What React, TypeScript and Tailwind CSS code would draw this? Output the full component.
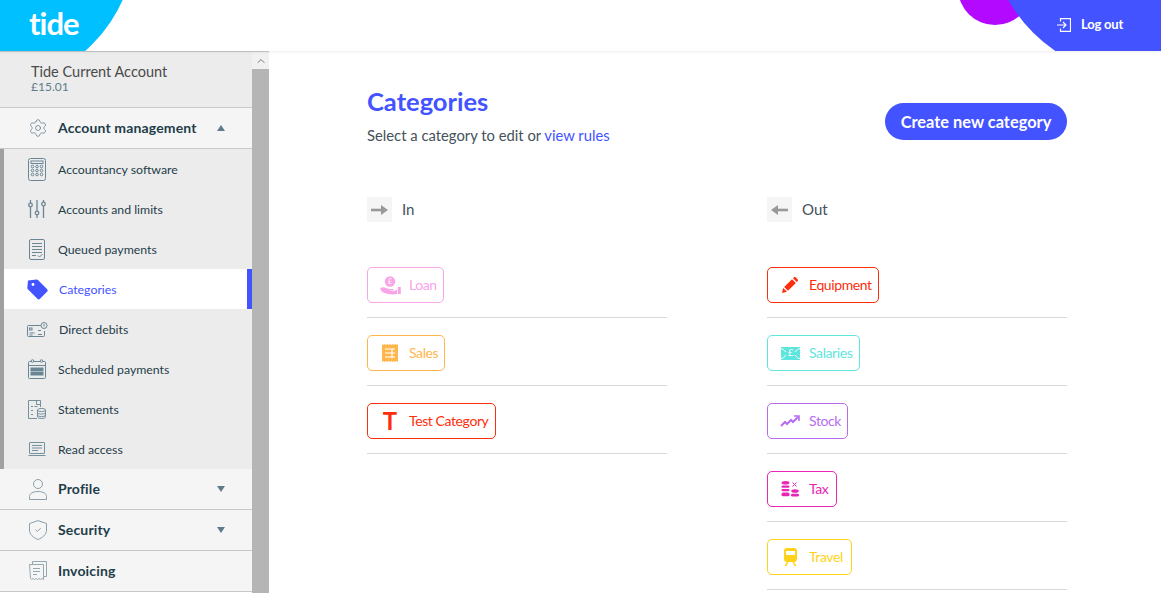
import type { ReactNode } from 'react';
import { ChevronUp, Settings } from 'lucide-react';

const stroke = '#6a8694';
const lightStroke = '#8ba0ab';

const Calculator = () => (
  <svg width="18" height="23" viewBox="0 0 18 23" fill="none" stroke={stroke} strokeWidth="1">
    <rect x="0.5" y="0.5" width="17" height="22" rx="2" />
    <rect x="3" y="3" width="12" height="2.5" />
    <g fill="none">
      {[8.5, 12.5, 16.5].map((y) =>
        [4.5, 9, 13.5].map((x) => <circle key={`${x}-${y}`} cx={x} cy={y} r="1.3" />),
      )}
    </g>
  </svg>
);

const Sliders = () => (
  <svg width="18" height="20" viewBox="0 0 18 20" fill="none" stroke={stroke} strokeWidth="1.3">
    <path d="M2.5 1v3M2.5 8v11M9 1v11M9 16v3M15.500 1v2M15.500 7v12" />
    <circle cx="2.5" cy="6" r="1.8" />
    <circle cx="9" cy="14" r="1.8" />
    <circle cx="15.5" cy="5" r="1.8" />
  </svg>
);

const Queued = () => (
  <svg width="16" height="21" viewBox="0 0 16 21" fill="none" stroke={stroke} strokeWidth="1">
    <rect x="0.5" y="0.5" width="15" height="20" rx="1.5" />
    <path d="M3 4.500h10M3 7.500h10M3 10.500h10M3 13.500h10M3 16.500h4M9 16.500l1.500 1.500 3-3" />
  </svg>
);

const Tag = () => (
  <svg width="21" height="21" viewBox="0 0 21 21">
    <path
      d="M1 1.5 9.5 0.5a2 2 0 0 1 1.5.6l9 9a1.800 1.800 0 0 1 0 2.600l-7 7a1.800 1.800 0 0 1-2.600 0l-9-9A2 2 0 0 1 0.300 9Z"
      fill="#4353ff"
    />
    <circle cx="6" cy="5.5" r="1.4" fill="#fff" />
  </svg>
);

const DirectDebit = () => (
  <svg width="21" height="15" viewBox="0 0 21 15" fill="none" stroke={stroke} strokeWidth="1">
    <path d="M15 3.500H1.500a1 1 0 0 0-1 1v9a1 1 0 0 0 1 1h15a1 1 0 0 0 1-1V9" />
    <rect x="2.5" y="6" width="2.5" height="2" />
    <path d="M2.500 11h5M2.500 13h3M11 8.500h3M11 12.500h4" />
    <circle cx="17" cy="3.5" r="3" fill="#ececec" />
    <path d="M17 2v2.500" />
  </svg>
);

const Calendar = () => (
  <svg width="18" height="20" viewBox="0 0 18 20" fill="none" stroke={stroke} strokeWidth="1">
    <rect x="0.5" y="2.5" width="17" height="17" rx="1" />
    <path d="M0.500 6.500h17" />
    <circle cx="4.5" cy="2" r="1.3" fill="#ececec" />
    <circle cx="13.5" cy="2" r="1.3" fill="#ececec" />
    <rect x="3" y="9" width="12" height="2.5" fill={stroke} />
    <rect x="3" y="13" width="12" height="3" fill={stroke} />
  </svg>
);

const Statements = () => (
  <svg width="18" height="19" viewBox="0 0 18 19" fill="none" stroke={stroke} strokeWidth="0.9">
    <path d="M12.500 7V0.500H0.500v18h8.500" />
    <path d="M8.500 0.500v4h4M3 6.500h2M3 10.500h2M3 14.500h2M6.500 6.500h3" />
    <ellipse cx="13.500" cy="10" rx="4" ry="1.600" />
    <path d="M9.500 10v6.800c0 1 1.800 1.700 4 1.700s4-.7 4-1.700V10M9.500 12.500c0 1 1.800 1.600 4 1.600s4-.6 4-1.600M9.500 15c0 1 1.800 1.600 4 1.600s4-.6 4-1.600" />
  </svg>
);

const Laptop = () => (
  <svg width="18" height="15" viewBox="0 0 18 15" fill="none" stroke={stroke} strokeWidth="0.9">
    <rect x="1.5" y="0.5" width="15" height="11" rx="0.5" />
    <path d="M4 3.500h10M4 6h10M4 8.500h6M0.500 13.500h17" />
  </svg>
);

const Person = () => (
  <svg width="18" height="21" viewBox="0 0 18 21" fill="none" stroke={lightStroke} strokeWidth="1">
    <circle cx="9" cy="5" r="4.500" />
    <path d="M0.500 20.500v-3c0-3 3.500-5 8.500-5s8.500 2 8.500 5v3Z" />
  </svg>
);

const Shield = () => (
  <svg width="18" height="20" viewBox="0 0 18 20" fill="none" stroke={lightStroke} strokeWidth="1">
    <path d="M9 0.600 17.500 3.500V10c0 4.500-4 7.800-8.500 9.500C4.500 17.800 0.500 14.500 0.500 10V3.500Z" />
    <path d="M6.300 9.500l2 2 3.400-3.400" />
  </svg>
);

const Invoicing = () => (
  <svg width="18" height="20" viewBox="0 0 18 20" fill="none" stroke={lightStroke} strokeWidth="0.9">
    <path d="M3.500 3V0.500h14v15H15" />
    <path d="M0.500 3.500h14v15l-1.500-1-1.500 1-1.500-1-1.500 1-1.500-1-1.500 1-1.500-1-1.500 1-1-1Z" fill="#f5f5f5" />
    <path d="M4 7.500h7M4 10.500h7M4 13.500h4" />
  </svg>
);

const Loan = () => (
  <svg width="21" height="19" viewBox="0 0 21 19" fill="#f8a5e8">
    <circle cx="10" cy="5.5" r="5.2" />
    <text x="10" y="8" fontSize="7" fill="#fff" textAnchor="middle" fontFamily="Lato">£</text>
    <path d="M0 12.500c2-1.500 4-1.500 6-.5l3 1h4c1 0 1 1.500 0 1.500H9.500v.5h5l2.500-1.500V18l-4 .5c-4 0-6-1-8-1.500-2 0-4-2-5-4.500Z" />
    <rect x="17.8" y="11" width="3" height="7" />
  </svg>
);

const Receipt = () => (
  <svg width="16" height="18" viewBox="0 0 16 18">
    <path
      d="M0 0l1.300 1L2.700 0 4 1 5.300 0l1.400 1L8 0l1.300 1 1.400-1L12 1l1.300-1 1.400 1L16 0v18l-1.300-1-1.400 1L12 17l-1.300 1-1.400-1L8 18l-1.300-1-1.400 1L4 17l-1.300 1-1.400-1L0 18Z"
      fill="#ffb74d"
    />
    <path d="M3 5h10M3 9h10M3 13h10M10 5v9" stroke="#fff" strokeWidth="1.200" />
  </svg>
);

const Salaries = () => (
  <svg width="19" height="13" viewBox="0 0 19 13">
    <rect width="19" height="13" fill="#5ee5de" />
    <path d="M0 1.500c2 .5 3.500 2 5 3.500M19 1.500c-2 .5-3.500 2-5 3.500M0 11.500c2 0 3.500-1.500 5-3.500M19 11.500c-2 0-3.500-1.500-5-3.500" stroke="#fff" fill="none" />
    <text x="9.500" y="9" fontSize="9" fill="#fff" textAnchor="middle" fontFamily="Lato">£</text>
  </svg>
);

const Stock = () => (
  <svg width="20" height="12" viewBox="0 0 20 12" fill="none" stroke="#b76cf0" strokeWidth="2">
    <path d="M1 11l4-4 2 2 4-4 2 2 5-5" />
    <path d="M14 1h5v5" strokeWidth="1.600" />
  </svg>
);

const Tax = () => (
  <svg width="18" height="16" viewBox="0 0 18 16" fill="#e826b5">
    <ellipse cx="4.500" cy="1.800" rx="4" ry="1.800" />
    <rect x="0.5" y="4.500" width="8" height="2.300" rx="1.150" />
    <rect x="0.5" y="8" width="8" height="2.300" rx="1.150" />
    <rect x="0.5" y="11.500" width="8" height="3.800" rx="1.600" />
    <ellipse cx="14" cy="10" rx="3.800" ry="1.800" />
    <rect x="10" y="12.800" width="8" height="2.800" rx="1.400" />
    <path d="M11.500 1.500l4 4M15.500 1.500l-4 4" stroke="#e826b5" fill="none" />
  </svg>
);

const Train = () => (
  <svg width="13" height="18" viewBox="0 0 13 18" fill="#ffd31a">
    <path d="M3 0h7a3 3 0 0 1 3 3v8a3 3 0 0 1-3 3H3a3 3 0 0 1-3-3V3a3 3 0 0 1 3-3Zm-1 3v4h9V3Z" fillRule="evenodd" />
    <path d="M3 14 0.500 18h2l2-4ZM10 14l2.500 4h-2l-2-4Z" />
  </svg>
);

const PencilIcon = () => (
  <svg width="16" height="16" viewBox="0 0 16 16" fill="#ff2d0a">
    <path d="M0 16l1.200-5L5 14.800Z" />
    <path d="M2.200 10 10 2.200 13.800 6 6 13.800Z" />
    <path d="M11 1.200 12 .3a1.200 1.200 0 0 1 1.600 0l2.100 2.100a1.200 1.200 0 0 1 0 1.600L14.800 5Z" />
  </svg>
);

const ArrowRightIcon = () => (
  <svg width="17" height="10" viewBox="0 0 17 10" fill="#999">
    <rect x="0" y="3.700" width="12" height="2.600" />
    <path d="M10 0l7 5-7 5Z" />
  </svg>
);

const ArrowLeftIcon = () => (
  <svg width="17" height="10" viewBox="0 0 17 10" fill="#999">
    <rect x="5" y="3.700" width="12" height="2.600" />
    <path d="M7 0 0 5l7 5Z" />
  </svg>
);

const subItems: { label: string; icon: ReactNode; active?: boolean; nudge?: boolean }[] = [
  { label: 'Accountancy software', icon: <Calculator /> },
  { label: 'Accounts and limits', icon: <Sliders /> },
  { label: 'Queued payments', icon: <Queued /> },
  { label: 'Categories', icon: <Tag />, active: true, nudge: true },
  { label: 'Direct debits', icon: <DirectDebit />, nudge: true },
  { label: 'Scheduled payments', icon: <Calendar /> },
  { label: 'Statements', icon: <Statements /> },
  { label: 'Read access', icon: <Laptop /> },
];

const inCategories = [
  { label: 'Loan', width: 'w-[77px]', color: 'border-[#f8a5e8] text-[#f8a5e8]', icon: <Loan /> },
  { label: 'Sales', width: 'w-[78px]', color: 'border-[#ffb74d] text-[#ffb74d]', icon: <Receipt /> },
  {
    label: 'Test Category',
    width: 'w-[129px]',
    color: 'border-[#ff2d0a] text-[#ff2d0a]',
    icon: <span className="text-[24px] leading-none font-bold">T</span>,
  },
];

const outCategories = [
  { label: 'Equipment', width: 'w-[112px]', color: 'border-[#ff2d0a] text-[#ff2d0a]', icon: <PencilIcon /> },
  { label: 'Salaries', width: 'w-[93px]', color: 'border-[#5ee5de] text-[#5ee5de]', icon: <Salaries /> },
  { label: 'Stock', width: 'w-[81px]', color: 'border-[#b76cf0] text-[#b76cf0]', icon: <Stock /> },
  { label: 'Tax', width: 'w-[70px]', color: 'border-[#e826b5] text-[#e826b5]', icon: <Tax /> },
  { label: 'Travel', width: 'w-[85px]', color: 'border-[#ffd31a] text-[#ffd31a]', icon: <Train /> },
];

function SectionRow({ icon, label, open, caret = true }: { icon: ReactNode; label: string; open?: boolean; caret?: boolean }) {
  return (
    <div className="flex h-10 items-center bg-[#f5f5f5]">
      <div className="flex w-[58px] justify-center pl-[20px] pr-[2px]">{icon}</div>
      <span className="pb-[2px] text-[14px] tracking-[0.15px] font-bold text-[#1f3d4a]">{label}</span>
      {caret && (
        <span
          className={`ml-auto mr-[27px] h-0 w-0 border-x-[4px] border-x-transparent ${
            open ? 'border-b-[6px] border-b-[#5f7b8a]' : 'border-t-[6px] border-t-[#5f7b8a]'
          }`}
        />
      )}
    </div>
  );
}

function CategoryColumn({
  title,
  arrow,
  items,
}: {
  title: string;
  arrow: ReactNode;
  items: typeof inCategories;
}) {
  return (
    <div className="w-[300px]">
      <div className="flex items-center gap-[10px] text-[15px] text-[#44525a]">
        <span className="flex h-[25px] w-[25px] items-center justify-center bg-[#f5f5f5]">{arrow}</span>
        {title}
      </div>
      <div className="mt-[45px] flex flex-col gap-[17px]">
        {items.map((c) => (
          <div key={c.label} className="border-b border-[#d8d8d8] pb-[14px]">
            <div className={`flex h-[36px] items-center rounded-[5px] border ${c.width} ${c.color}`}>
              <span className="flex w-[41px] shrink-0 justify-center pl-[3px]">{c.icon}</span>
              <span className="pb-[2px] text-[14px] tracking-[-0.4px] whitespace-nowrap">{c.label}</span>
            </div>
          </div>
        ))}
      </div>
    </div>
  );
}

export default function App() {
  return (
    <div className="h-[593px] w-[1161px] overflow-hidden bg-white font-['Lato',sans-serif]">
      {/* Header */}
      <div className="relative z-10 h-[51px] overflow-hidden bg-white shadow-[0_1px_3px_rgba(0,0,0,0.08)]">
        <div className="absolute left-[-166px] top-[-213px] h-[302px] w-[302px] rounded-full bg-[#00c0ff]" />
        <div className="absolute left-[29px] top-[4px] text-[31px] leading-[38px] font-bold tracking-[-1px] text-white">
          tide
        </div>
        <div className="absolute left-[958px] top-[-49px] h-[74px] w-[74px] rounded-full bg-[#b30aff]" />
        <div className="absolute left-[989px] top-[-225px] h-[302px] w-[302px] rounded-full bg-[#4353ff]" />
        <div className="absolute left-[1057px] top-[15px] flex items-center gap-[10px] text-[13px] font-bold tracking-[-0.2px] text-white">
          <svg width="14" height="14" viewBox="0 0 14 14" fill="none" stroke="#fff" strokeWidth="1.2">
            <path d="M3.500 3.500V0.600h10v12.800h-10v-2.900M0 7h8.500M6 4l3 3-3 3" />
          </svg>
          Log out
        </div>
      </div>

      <div className="flex h-[542px]">
        {/* Sidebar */}
        <div className="w-[252px] shrink-0 overflow-hidden border-t border-[#c9c9c9]">
          <div className="flex h-[55px] flex-col justify-center bg-[#ececec] pl-[31px] pb-[3px]">
            <div className="text-[14.5px] leading-[17px] text-[#4a4a4a]">Tide Current Account</div>
            <div className="text-[12px] leading-[13px] text-[#5f7b8a]">£15.01</div>
          </div>
          <div className="border-y border-[#c9c9c9]">
            <SectionRow open label="Account management" icon={<Settings size={20} stroke={stroke} strokeWidth={1} />} />
          </div>
          <div className="border-l-4 border-[#a0a0a0] bg-[#ececec]">
            {subItems.map((item) => (
              <div
                key={item.label}
                className={`flex h-10 items-center ${item.active ? 'border-r-[5px] border-[#4353ff] bg-white text-[#4353ff]' : 'text-[#1f3d4a]'}`}
              >
                <span className="flex w-[54px] justify-center pl-[16px] pr-[4px]">{item.icon}</span>
                <span className={`pt-[2px] text-[12.3px] ${item.nudge ? 'ml-[1px]' : ''}`}>{item.label}</span>
              </div>
            ))}
          </div>
          <SectionRow label="Profile" icon={<Person />} />
          <div className="border-t border-[#c9c9c9]">
            <SectionRow label="Security" icon={<Shield />} />
          </div>
          <div className="border-y border-[#c9c9c9]">
            <SectionRow caret={false} label="Invoicing" icon={<Invoicing />} />
          </div>
        </div>

        {/* Scrollbar */}
        <div className="w-[17px] shrink-0 border-t border-[#c9c9c9] bg-[#b5b5b5]">
          <div className="flex h-[17px] items-center justify-center bg-[#f1f1f1]">
            <ChevronUp size={12} stroke="#777" />
          </div>
        </div>

        {/* Content */}
        <div className="flex-1 pl-[98px] pr-[94px] pt-[35px]">
          <div className="flex items-start justify-between">
            <div>
              <h1 className="text-[25.5px] leading-[30px] font-bold text-[#4353ff]">Categories</h1>
              <p className="mt-[9px] text-[14.8px] leading-[20px] text-[#44525a]">
                Select a category to edit or <span className="text-[#4353ff]">view rules</span>
              </p>
            </div>
            <button className="mt-[17px] flex h-[37px] w-[182px] items-center justify-center rounded-full bg-[#4353ff] pt-[2px] text-[16.4px] font-bold text-white">
              Create new category
            </button>
          </div>
          <div className="mt-[52px] flex gap-[100px]">
            <CategoryColumn title="In" arrow={<ArrowRightIcon />} items={inCategories} />
            <CategoryColumn title="Out" arrow={<ArrowLeftIcon />} items={outCategories} />
          </div>
        </div>
      </div>
    </div>
  );
}
